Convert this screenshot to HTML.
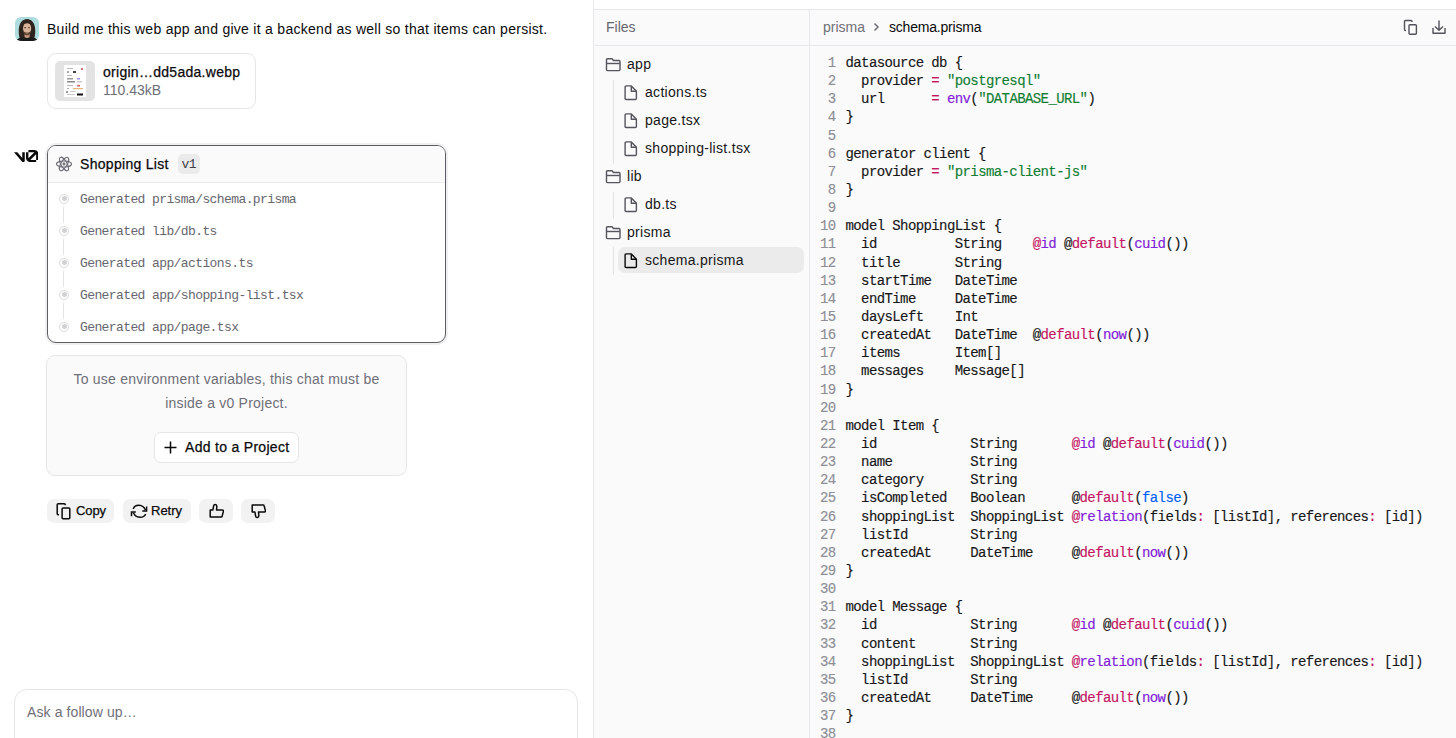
<!DOCTYPE html>
<html><head><meta charset="utf-8">
<style>
*{box-sizing:border-box;margin:0;padding:0}
html,body{width:1456px;height:738px;overflow:hidden;background:#fff;font-family:"Liberation Sans",sans-serif;color:#0a0a0a}
.a{position:absolute}
.nw{white-space:nowrap}
#vdiv{position:absolute;left:593px;top:0;width:1px;height:738px;background:#e9e9ed;box-shadow:1px 0 0 #f3f3f5}
#right{position:absolute;left:594px;top:0;width:862px;height:738px;background:#fafafa}
#topstrip{position:absolute;left:0;top:0;width:862px;height:10px;background:#fff;border-bottom:1px solid #e8e8ec}
#hdr{position:absolute;left:0;top:10px;width:862px;height:36px;border-bottom:1px solid #e8e8ec}
#fdiv{position:absolute;left:215px;top:10px;width:1px;height:728px;background:#e8e8ec}
#code{position:absolute;left:216px;top:54px;font-family:"Liberation Mono",monospace;font-size:14px;letter-spacing:-0.6px;line-height:18.15px;color:#171717;-webkit-text-stroke:0.15px currentColor}
#code .cl{height:18.15px;white-space:pre}
#code .ln{display:inline-block;width:25.5px;text-align:right;color:#8e8e96;margin-right:10px}
.s{color:#107d32}
.p{color:#c41562}
.f{color:#8020d8}
.d{color:#c41562}
.b{color:#005ff2}
.tree{position:absolute;font-size:14px;color:#171717;white-space:nowrap;line-height:20px}
.btn{position:absolute;top:499px;height:24px;background:#f2f2f2;border-radius:7px}
.gen{position:absolute;left:80px;font-family:"Liberation Mono",monospace;font-size:13px;letter-spacing:-0.6px;color:#66666e;white-space:pre;line-height:16px}
.dot{position:absolute;left:59px;width:10px;height:10px;border-radius:50%;background:#fff;border:1px solid #dadade}
.dot::after{content:"";position:absolute;left:1.5px;top:1.5px;width:5px;height:5px;border-radius:50%;background:#d2d2d6}
.vl{position:absolute;left:63px;width:1px;height:16px;background:#e4e4e7}
.med{-webkit-text-stroke:0.25px currentColor}
</style></head><body>

<div class="a" style="left:15px;top:17px;width:24px;height:24px;border-radius:6px;overflow:hidden">
  <svg width="24" height="24" viewBox="0 0 24 24">
    <rect width="24" height="24" fill="#aedcdf"/>
    <path d="M4.6 21 C2.8 14 3.2 2.3 12 1.9 C20.8 2.3 21.2 14 19.4 21 Z" fill="#2f251e"/>
    <path d="M9.6 15 H14.6 V21 H9.6Z" fill="#c99a80"/>
    <ellipse cx="12.1" cy="11.4" rx="4.1" ry="5.9" fill="#dab39a"/>
    <path d="M8 12.6 C8.2 16.8 10.2 18.3 12.1 18.3 C14 18.3 16 16.8 16.2 12.6 C15.6 15.2 14.2 15.8 12.1 15.8 C10 15.8 8.6 15.2 8 12.6Z" fill="#54402f"/>
    <path d="M10.6 16.2 Q12.1 17 13.6 16.2" stroke="#a8705e" stroke-width="0.7" fill="none"/>
    <rect x="9.3" y="10.3" width="1.8" height="0.9" fill="#3b2b22"/><rect x="13.1" y="10.3" width="1.8" height="0.9" fill="#3b2b22"/>
    <path d="M7.8 8.8 C8.6 5.4 15.6 5.4 16.4 8.8 L16.9 6 C15.5 3 8.7 3 7.3 6Z" fill="#2f251e"/>
    <path d="M1.5 24 C2.5 20.8 6 20.2 9.6 20.2 Q12.1 21.8 14.6 20.2 C18.2 20.2 21.7 20.8 22.7 24Z" fill="#1c1c1c"/>
  </svg>
</div>
<div class="a nw" style="left:47px;top:19px;font-size:14px;line-height:20px;letter-spacing:0.28px;color:#0a0a0a">Build me this web app and give it a backend as well so that items can persist.</div>

<div class="a" style="left:47px;top:53px;width:209px;height:56px;border:1px solid #e6e6e6;border-radius:9px;background:#fff"></div>
<div class="a" style="left:55px;top:61px;width:40px;height:40px;border-radius:5px;background:#e3e3e3;overflow:hidden">
  <div class="a" style="left:9px;top:4px;width:22px;height:32px;background:#fff"></div>
  <svg class="a" style="left:9px;top:4px" width="22" height="32" viewBox="0 0 22 32">
    <rect x="3" y="3" width="6" height="1" fill="#bbb"/><rect x="17" y="3" width="2" height="2" fill="#c77"/>
    <rect x="3" y="6" width="2" height="2" fill="#aaa"/><rect x="9" y="6" width="3" height="2" fill="#444"/>
    <rect x="3" y="10" width="5" height="1" fill="#bbb"/><rect x="3" y="13" width="6" height="1.5" fill="#999"/><rect x="13" y="13" width="3" height="1.5" fill="#99f"/>
    <rect x="3" y="16" width="8" height="1.5" fill="#888"/><rect x="13" y="16" width="5" height="1.5" fill="#ccc"/>
    <rect x="3" y="20" width="6" height="1" fill="#bbb"/><rect x="13" y="20" width="3" height="1.5" fill="#c66"/>
    <rect x="3" y="23" width="2" height="1" fill="#aaa"/><rect x="9" y="23" width="10" height="1.2" fill="#e7b57a"/>
    <rect x="2" y="26" width="2" height="2" fill="#999"/><rect x="6" y="26" width="6" height="1" fill="#ccc"/>
    <rect x="3" y="29" width="8" height="1" fill="#ccc"/><rect x="13" y="28.5" width="6" height="2" fill="#111"/>
  </svg>
</div>
<div class="a nw med" style="left:103px;top:62px;font-size:14px;line-height:20px;letter-spacing:0.28px;color:#0a0a0a">origin…dd5ada.webp</div>
<div class="a nw" style="left:103px;top:81px;font-size:14px;line-height:18px;color:#6f6f78">110.43kB</div>

<svg class="a" style="left:13.7px;top:150.1px" width="24.6" height="12.3" viewBox="0 0 40 20" fill="#0a0a0a"><path d="M23.3919 0H32.9188C36.7819 0 39.9136 3.13165 39.9136 6.99475V16.0805H36.0006V6.99475C36.0006 6.90167 35.9969 6.80947 35.9898 6.71825L26.4628 16.079C26.4949 16.08 26.5272 16.0805 26.5595 16.0805H36.0006V19.7762H26.5595C22.6964 19.7762 19.4788 16.6139 19.4788 12.7508V3.68923H23.3919V12.7508C23.3919 12.9253 23.4054 13.0977 23.4316 13.2668L33.1682 3.6995C33.0861 3.6927 33.003 3.68923 32.9188 3.68923H23.3919V0Z"/><path d="M13.2223 19.0358L0 3.68917H5.34388L13.4368 13.0816V3.68917H17.5V17.5704C17.5 19.6688 14.8978 20.6 13.2223 19.0358Z"/></svg>

<div class="a" style="left:45px;top:143px;width:403px;height:202px;border-radius:11px;background:#f0f0f0"></div>
<div class="a" style="left:47px;top:145px;width:399px;height:198px;border:1.3px solid #5c5c64;border-radius:9px;background:#fff;overflow:hidden">
  <div class="a" style="left:0;top:0;width:397px;height:37px;background:#fafafa;border-bottom:1px solid #ebebeb"></div>
</div>
<svg class="a" style="left:55px;top:155px" width="18" height="18" viewBox="0 0 18 18" fill="none" stroke="#6f6f78" stroke-width="1.1">
  <circle cx="9" cy="9" r="1.4" fill="#6f6f78" stroke="none"/>
  <ellipse cx="9" cy="9" rx="7.6" ry="3"/>
  <ellipse cx="9" cy="9" rx="7.6" ry="3" transform="rotate(60 9 9)"/>
  <ellipse cx="9" cy="9" rx="7.6" ry="3" transform="rotate(120 9 9)"/>
</svg>
<div class="a nw med" style="left:80px;top:154px;font-size:14px;line-height:20px;letter-spacing:0.3px;color:#0a0a0a">Shopping List</div>
<div class="a" style="left:178px;top:154px;width:22px;height:20px;border-radius:5px;background:#ebebeb"></div>
<div class="a nw" style="left:181.5px;top:157px;font-family:'Liberation Mono',monospace;font-size:13px;letter-spacing:-0.6px;line-height:16px;color:#3f3f46">v1</div>

<div class="dot" style="top:193.5px"></div>
<div class="vl" style="top:207px"></div>
<div class="dot" style="top:225.5px"></div>
<div class="vl" style="top:239px"></div>
<div class="dot" style="top:257.5px"></div>
<div class="vl" style="top:271px"></div>
<div class="dot" style="top:289.5px"></div>
<div class="vl" style="top:303px"></div>
<div class="dot" style="top:321.5px"></div>
<div class="gen" style="top:192px">Generated prisma/schema.prisma</div>
<div class="gen" style="top:224px">Generated lib/db.ts</div>
<div class="gen" style="top:256px">Generated app/actions.ts</div>
<div class="gen" style="top:288px">Generated app/shopping-list.tsx</div>
<div class="gen" style="top:320px">Generated app/page.tsx</div>

<div class="a" style="left:46px;top:355px;width:361px;height:121px;border:1px solid #e6e6e6;border-radius:9px;background:#fafafa"></div>
<div class="a nw" style="left:46px;top:367px;width:361px;text-align:center;font-size:14px;line-height:24px;letter-spacing:0.22px;color:#6f6f78">To use environment variables, this chat must be<br>inside a v0 Project.</div>
<div class="a" style="left:154px;top:432px;width:145px;height:31px;border:1px solid #e6e6e6;border-radius:7px;background:#fff"></div>
<svg class="a" style="left:163px;top:440px" width="15" height="15" viewBox="0 0 15 15" stroke="#0a0a0a" stroke-width="1.5" fill="none"><path d="M7.5 1.5V13.5M1.5 7.5H13.5"/></svg>
<div class="a nw med" style="left:185px;top:437px;font-size:14px;line-height:20px;letter-spacing:0.3px;color:#0a0a0a">Add to a Project</div>

<div class="btn" style="left:47px;width:67px"></div>
<div class="btn" style="left:123px;width:68px"></div>
<div class="btn" style="left:199px;width:34px"></div>
<div class="btn" style="left:241px;width:34px"></div>
<svg class="a" style="left:55px;top:502px" width="17" height="18" viewBox="0 0 17 18" fill="none" stroke="#0a0a0a" stroke-width="1.5" stroke-linejoin="round">
  <path d="M10.3 3.3V2.8C10.3 2.2 9.9 1.8 9.3 1.8H3.2C2.6 1.8 2.2 2.2 2.2 2.8V11.8C2.2 12.4 2.6 12.8 3.2 12.8H4"/>
  <rect x="7.1" y="6.1" width="7.7" height="10.7" rx="1"/>
</svg>
<div class="a nw med" style="left:76px;top:501px;font-size:13px;line-height:20px;letter-spacing:-0.1px;color:#0a0a0a">Copy</div>
<svg class="a" style="left:130px;top:503px" width="18" height="17" viewBox="0 0 18 17" fill="none" stroke="#0a0a0a" stroke-width="1.5" stroke-linejoin="miter">
  <path d="M3.2 5.9C5 1.2 12.8 0.6 15.4 7.1"/><path d="M16.6 3.6V8H12.3"/>
  <path d="M15.7 11C13.8 15.2 6 16 3.4 9.8"/><path d="M1.5 13.3V9H5.8"/>
</svg>
<div class="a nw med" style="left:151px;top:501px;font-size:13px;line-height:20px;color:#0a0a0a">Retry</div>
<svg class="a" style="left:208px;top:503px" width="16" height="16" viewBox="0 0 16 16" fill="none" stroke="#0a0a0a" stroke-width="1.5" stroke-linejoin="round">
  <path d="M2.2 14.1V6.9H4.9L5.7 2.6C5.9 1.8 6.6 1.5 7.3 1.6C8.3 1.7 8.9 2.6 8.8 3.6L8.5 6.9H14.1C15 6.9 15.6 7.6 15.4 8.4L14.1 13.3C14 13.8 13.6 14.1 13.1 14.1Z"/>
</svg>
<svg class="a" style="left:249.5px;top:503px" width="16" height="16" viewBox="0 0 16 16" fill="none" stroke="#0a0a0a" stroke-width="1.5" stroke-linejoin="round">
  <path transform="translate(0 16) scale(1 -1)" d="M2.2 14.1V6.9H4.9L5.7 2.6C5.9 1.8 6.6 1.5 7.3 1.6C8.3 1.7 8.9 2.6 8.8 3.6L8.5 6.9H14.1C15 6.9 15.6 7.6 15.4 8.4L14.1 13.3C14 13.8 13.6 14.1 13.1 14.1Z"/>
</svg>

<div class="a" style="left:14px;top:689px;width:564px;height:80px;border:1px solid #e6e6e6;border-radius:13px;background:#fff"></div>
<div class="a nw" style="left:27px;top:702px;font-size:14px;line-height:20px;letter-spacing:0.1px;color:#6f6f78">Ask a follow up…</div>

<div id="vdiv"></div>
<div id="right">
  <div id="topstrip"></div>
  <div id="hdr"></div>
  <div id="fdiv"></div>
  <div class="a nw" style="left:12px;top:17px;font-size:14px;line-height:20px;color:#66666e">Files</div>
  <div class="a nw" style="left:229px;top:17px;font-size:14px;line-height:20px;color:#6f6f78">prisma</div>
  <svg class="a" style="left:278px;top:21px" width="8" height="12" viewBox="0 0 8 12" fill="none" stroke="#6f6f78" stroke-width="1.5"><path d="M2.5 2.5L6 6L2.5 9.5"/></svg>
  <div class="a nw" style="left:295px;top:17px;font-size:14px;line-height:20px;letter-spacing:-0.2px;color:#0a0a0a">schema.prisma</div>
  <svg class="a" style="left:809px;top:19px" width="16" height="17" viewBox="0 0 16 17" fill="none" stroke="#52525b" stroke-width="1.4" stroke-linejoin="round">
    <path d="M9 3V2.5C9 1.9 8.6 1.5 8 1.5H2.5C1.9 1.5 1.5 1.9 1.5 2.5V10.5C1.5 11.1 1.9 11.5 2.5 11.5H3"/>
    <rect x="6" y="5.7" width="7.4" height="9.6" rx="1"/>
  </svg>
  <svg class="a" style="left:837px;top:19px" width="16" height="16" viewBox="0 0 16 16" fill="none" stroke="#52525b" stroke-width="1.4" stroke-linejoin="round">
    <path d="M8 1.5V11M4 7.5L8 11.2L12 7.5"/>
    <path d="M2 9V14.2H14V9"/>
  </svg>
  <div class="a" style="left:24px;top:247px;width:186px;height:26px;border-radius:7px;background:#ebebeb"></div>
<div class="a" style="left:19px;top:80px;width:1px;height:84px;background:#e4e4e7"></div>
<div class="a" style="left:19px;top:192px;width:1px;height:27px;background:#e4e4e7"></div>
<div class="a" style="left:19px;top:247px;width:1px;height:28px;background:#e4e4e7"></div>
<svg class="a" style="left:11px;top:57px" width="17" height="16" viewBox="0 0 17 16" fill="none" stroke="#55555d" stroke-width="1.4" stroke-linejoin="round"><path d="M1.5 12.6V2.8Q1.5 1.8 2.5 1.8H7L8.5 3.5H14Q15 3.5 15 4.5V12.6Q15 13.6 14 13.6H2.5Q1.5 13.6 1.5 12.6Z"/><path d="M1.5 6.5H15"/></svg>
<div class="tree" style="left:33px;top:54px;letter-spacing:0.3px">app</div>
<svg class="a" style="left:30px;top:85px" width="14" height="16" viewBox="0 0 14 16" fill="none" stroke="#55555d" stroke-width="1.4" stroke-linejoin="round"><path d="M1.1 2Q1.1 0.9 2.2 0.9H7.3L12.4 6.2V13.4Q12.4 14.5 11.3 14.5H2.2Q1.1 14.5 1.1 13.4Z"/><path d="M7.3 0.9V6.2H12.4"/></svg>
<div class="tree" style="left:51px;top:82px;letter-spacing:0.3px">actions.ts</div>
<svg class="a" style="left:30px;top:113px" width="14" height="16" viewBox="0 0 14 16" fill="none" stroke="#55555d" stroke-width="1.4" stroke-linejoin="round"><path d="M1.1 2Q1.1 0.9 2.2 0.9H7.3L12.4 6.2V13.4Q12.4 14.5 11.3 14.5H2.2Q1.1 14.5 1.1 13.4Z"/><path d="M7.3 0.9V6.2H12.4"/></svg>
<div class="tree" style="left:51px;top:110px;letter-spacing:0.3px">page.tsx</div>
<svg class="a" style="left:30px;top:141px" width="14" height="16" viewBox="0 0 14 16" fill="none" stroke="#55555d" stroke-width="1.4" stroke-linejoin="round"><path d="M1.1 2Q1.1 0.9 2.2 0.9H7.3L12.4 6.2V13.4Q12.4 14.5 11.3 14.5H2.2Q1.1 14.5 1.1 13.4Z"/><path d="M7.3 0.9V6.2H12.4"/></svg>
<div class="tree" style="left:51px;top:138px;letter-spacing:0.3px">shopping-list.tsx</div>
<svg class="a" style="left:11px;top:169px" width="17" height="16" viewBox="0 0 17 16" fill="none" stroke="#55555d" stroke-width="1.4" stroke-linejoin="round"><path d="M1.5 12.6V2.8Q1.5 1.8 2.5 1.8H7L8.5 3.5H14Q15 3.5 15 4.5V12.6Q15 13.6 14 13.6H2.5Q1.5 13.6 1.5 12.6Z"/><path d="M1.5 6.5H15"/></svg>
<div class="tree" style="left:33px;top:166px;letter-spacing:0.3px">lib</div>
<svg class="a" style="left:30px;top:197px" width="14" height="16" viewBox="0 0 14 16" fill="none" stroke="#55555d" stroke-width="1.4" stroke-linejoin="round"><path d="M1.1 2Q1.1 0.9 2.2 0.9H7.3L12.4 6.2V13.4Q12.4 14.5 11.3 14.5H2.2Q1.1 14.5 1.1 13.4Z"/><path d="M7.3 0.9V6.2H12.4"/></svg>
<div class="tree" style="left:51px;top:194px;letter-spacing:0.3px">db.ts</div>
<svg class="a" style="left:11px;top:225px" width="17" height="16" viewBox="0 0 17 16" fill="none" stroke="#55555d" stroke-width="1.4" stroke-linejoin="round"><path d="M1.5 12.6V2.8Q1.5 1.8 2.5 1.8H7L8.5 3.5H14Q15 3.5 15 4.5V12.6Q15 13.6 14 13.6H2.5Q1.5 13.6 1.5 12.6Z"/><path d="M1.5 6.5H15"/></svg>
<div class="tree" style="left:33px;top:222px;letter-spacing:0.3px">prisma</div>
<svg class="a" style="left:30px;top:253px" width="14" height="16" viewBox="0 0 14 16" fill="none" stroke="#0a0a0a" stroke-width="1.4" stroke-linejoin="round"><path d="M1.1 2Q1.1 0.9 2.2 0.9H7.3L12.4 6.2V13.4Q12.4 14.5 11.3 14.5H2.2Q1.1 14.5 1.1 13.4Z"/><path d="M7.3 0.9V6.2H12.4"/></svg>
<div class="tree" style="left:51px;top:250px;letter-spacing:0.3px">schema.prisma</div>
  <div id="code"><div class="cl"><span class="ln">1</span>datasource db {</div>
<div class="cl"><span class="ln">2</span>  provider <span class="p">=</span> <span class="s">&quot;postgresql&quot;</span></div>
<div class="cl"><span class="ln">3</span>  url      <span class="p">=</span> <span class="f">env</span>(<span class="s">&quot;DATABASE_URL&quot;</span>)</div>
<div class="cl"><span class="ln">4</span>}</div>
<div class="cl"><span class="ln">5</span></div>
<div class="cl"><span class="ln">6</span>generator client {</div>
<div class="cl"><span class="ln">7</span>  provider <span class="p">=</span> <span class="s">&quot;prisma-client-js&quot;</span></div>
<div class="cl"><span class="ln">8</span>}</div>
<div class="cl"><span class="ln">9</span></div>
<div class="cl"><span class="ln">10</span>model ShoppingList {</div>
<div class="cl"><span class="ln">11</span>  id          String    <span class="p">@</span><span class="f">id</span> @<span class="d">default</span>(<span class="f">cuid</span>())</div>
<div class="cl"><span class="ln">12</span>  title       String</div>
<div class="cl"><span class="ln">13</span>  startTime   DateTime</div>
<div class="cl"><span class="ln">14</span>  endTime     DateTime</div>
<div class="cl"><span class="ln">15</span>  daysLeft    Int</div>
<div class="cl"><span class="ln">16</span>  createdAt   DateTime  @<span class="d">default</span>(<span class="f">now</span>())</div>
<div class="cl"><span class="ln">17</span>  items       Item[]</div>
<div class="cl"><span class="ln">18</span>  messages    Message[]</div>
<div class="cl"><span class="ln">19</span>}</div>
<div class="cl"><span class="ln">20</span></div>
<div class="cl"><span class="ln">21</span>model Item {</div>
<div class="cl"><span class="ln">22</span>  id            String       <span class="p">@</span><span class="f">id</span> @<span class="d">default</span>(<span class="f">cuid</span>())</div>
<div class="cl"><span class="ln">23</span>  name          String</div>
<div class="cl"><span class="ln">24</span>  category      String</div>
<div class="cl"><span class="ln">25</span>  isCompleted   Boolean      @<span class="d">default</span>(<span class="b">false</span>)</div>
<div class="cl"><span class="ln">26</span>  shoppingList  ShoppingList <span class="p">@</span><span class="f">relation</span>(fields<span class="p">:</span> [listId], references<span class="p">:</span> [id])</div>
<div class="cl"><span class="ln">27</span>  listId        String</div>
<div class="cl"><span class="ln">28</span>  createdAt     DateTime     @<span class="d">default</span>(<span class="f">now</span>())</div>
<div class="cl"><span class="ln">29</span>}</div>
<div class="cl"><span class="ln">30</span></div>
<div class="cl"><span class="ln">31</span>model Message {</div>
<div class="cl"><span class="ln">32</span>  id            String       <span class="p">@</span><span class="f">id</span> @<span class="d">default</span>(<span class="f">cuid</span>())</div>
<div class="cl"><span class="ln">33</span>  content       String</div>
<div class="cl"><span class="ln">34</span>  shoppingList  ShoppingList <span class="p">@</span><span class="f">relation</span>(fields<span class="p">:</span> [listId], references<span class="p">:</span> [id])</div>
<div class="cl"><span class="ln">35</span>  listId        String</div>
<div class="cl"><span class="ln">36</span>  createdAt     DateTime     @<span class="d">default</span>(<span class="f">now</span>())</div>
<div class="cl"><span class="ln">37</span>}</div>
<div class="cl"><span class="ln">38</span></div></div>
</div>
</body></html>
